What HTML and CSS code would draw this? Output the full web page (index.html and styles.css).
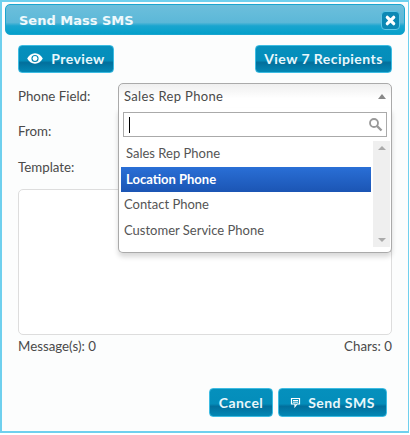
FILE: index.html
```html
<!DOCTYPE html>
<html>
<head>
  <meta charset="UTF-8">
  <title>Send Mass SMS</title>
  <link rel="stylesheet" href="styles.css">
</head>
<body>
<div class="dialog">
  <div class="titlebar">
    <span class="title">Send Mass SMS</span>
    <button class="close" aria-label="Close">
      <svg width="11" height="11" viewBox="0 0 11 11"><path d="M2.3 2.3 L8.7 8.7 M8.7 2.3 L2.3 8.7" stroke="#fff" stroke-width="3.2" stroke-linecap="round"/></svg>
    </button>
  </div>

  <div class="content">
    <div class="toolbar">
      <button class="btn btn-preview">
        <svg width="16" height="11" viewBox="0 0 16 11"><path fill-rule="evenodd" fill="#fff" d="M8 0.3 C4.5 0.3 1.8 2.6 0.2 5.5 C1.8 8.4 4.5 10.7 8 10.7 C11.5 10.7 14.2 8.4 15.8 5.5 C14.2 2.6 11.5 0.3 8 0.3 Z M8 1.9 A3.6 3.6 0 1 1 8 9.1 A3.6 3.6 0 1 1 8 1.9 Z"/><circle cx="8" cy="5.5" r="2.4" fill="#fff"/></svg>
        Preview
      </button>
      <button class="btn btn-recipients">View 7 Recipients</button>
    </div>

    <div class="field-row phone-row">
      <label class="field-label">Phone Field:</label>
      <div class="select-wrap">
        <div class="select">
          <span>Sales Rep Phone</span>
          <span class="arrow-up"></span>
        </div>
        <div class="dropdown">
          <div class="search">
            <span class="caret"></span>
            <svg width="15" height="15" viewBox="0 0 15 15"><circle cx="6" cy="6" r="4" fill="none" stroke="#999" stroke-width="1.8"/><path d="M9 9 L13.5 13.5" stroke="#999" stroke-width="2.4"/></svg>
          </div>
          <div class="list-wrap">
            <ul class="list">
              <li class="first">Sales Rep Phone</li>
              <li class="active">Location Phone</li>
              <li>Contact Phone</li>
              <li>Customer Service Phone</li>
            </ul>
            <div class="scrollbar">
              <span class="sb-up"></span>
              <span class="sb-down"></span>
            </div>
          </div>
        </div>
      </div>
    </div>
    <div class="field-row from-row">
      <label class="field-label">From:</label>
    </div>
    <div class="field-row template-row">
      <label class="field-label">Template:</label>
    </div>

    <div class="message-box"></div>

    <div class="counts">
      <span>Message(s): 0</span>
      <span>Chars: 0</span>
    </div>

    <div class="actions">
      <button class="btn btn-cancel">Cancel</button>
      <button class="btn btn-send">
        <svg width="11" height="11" viewBox="0 0 11 11"><path fill="none" stroke="#fff" stroke-width="1.2" d="M1.5 1.5 H9.5 V7 H7 L5 9.5 V7 H1.5 Z"/><path stroke="#fff" d="M3 3.5 H8 M3 5.2 H8"/></svg>
        Send SMS
      </button>
    </div>
  </div>
</div>
</body>
</html>
```
FILE: styles.css
```css
html,
body {
  margin: 0;
  padding: 0;
  background: #fff;
}

body {
  font-family: "Lato", sans-serif;
  font-size: 13.3px;
  color: #4a4a4a;
}

.dialog {
  box-sizing: border-box;
  width: 409px;
  height: 433px;
  padding: 2px 3px 3px 3px;
  border: 2px solid #6fd0ee;
  border-right-width: 1px;
  background: #fcfdfd;
}

/* title bar */
.titlebar {
  display: flex;
  align-items: center;
  justify-content: space-between;
  height: 31px;
  box-sizing: border-box;
  padding: 0 4px 0 13px;
  border-radius: 5px;
  border: 1px solid #1ba5cf;
  background: linear-gradient(#6cbfdc 0%, #5cb8d8 60%, #1aa5cf 72%, #04a0ca 100%);
}

.title {
  padding-top: 1px;
  font-family: "DejaVu Sans", sans-serif;
  font-size: 13px;
  font-weight: bold;
  color: #eef9fc;
}

.close {
  width: 19px;
  height: 19px;
  margin-top: 1px;
  padding: 0;
  display: flex;
  align-items: center;
  justify-content: center;
  border: 1px solid #5cc6e6;
  border-radius: 4px;
  background: #0b88b4;
}

.content {
  padding: 10px 13px 0 13px;
}

.toolbar {
  display: flex;
  justify-content: space-between;
}

/* buttons */
.btn {
  display: inline-flex;
  align-items: center;
  justify-content: center;
  gap: 8px;
  box-sizing: border-box;
  height: 28px;
  padding: 0 0 1px 0;
  font-family: "Lato", sans-serif;
  font-size: 14px;
  font-weight: bold;
  letter-spacing: 0.45px;
  color: #e9f7fb;
  border: 1px solid #3dbce2;
  border-radius: 4px;
  background: linear-gradient(#0590bd 0%, #048dba 55%, #026f9c 64%, #0388b5 100%);
}

.btn-preview {
  width: 96px;
}

.btn-recipients {
  width: 137px;
}

.btn-cancel {
  width: 64px;
}

.btn-send {
  gap: 7px;
  width: 109px;
}

/* form rows */
.field-row {
  display: flex;
}

.field-label {
  width: 100px;
  padding-top: 4px;
  flex: none;
}

.phone-row {
  height: 36px;
  margin-top: 10px;
}

.phone-row .field-label {
  padding-top: 5px;
}

.from-row {
  height: 36px;
}

.template-row {
  height: 34px;
}

/* select and its open list */
.select-wrap {
  position: relative;
  width: 274px;
}

.select {
  display: flex;
  align-items: center;
  justify-content: space-between;
  box-sizing: border-box;
  height: 26px;
  padding: 0 5px;
  border: 1px solid #aaa;
  border-radius: 5px 5px 0 0;
  background: linear-gradient(#efefef, #fff 60%);
  font-size: 13px;
  letter-spacing: 0.35px;
}

.arrow-up {
  width: 0;
  height: 0;
  border-left: 4px solid transparent;
  border-right: 4px solid transparent;
  border-bottom: 5px solid #888;
}

.dropdown {
  position: absolute;
  top: 25px;
  left: 0;
  right: 0;
  box-sizing: border-box;
  height: 145px;
  padding: 4px;
  border: 1px solid #aaa;
  border-top: none;
  border-radius: 0 0 5px 5px;
  background: #fff;
  box-shadow: 0 4px 5px rgba(0, 0, 0, 0.15);
}

.search {
  display: flex;
  align-items: center;
  justify-content: space-between;
  box-sizing: border-box;
  height: 25px;
  padding: 0 3px 0 5px;
  border: 1px solid #aaa;
}

.caret {
  width: 1px;
  height: 16px;
  background: #000;
}

.list-wrap {
  display: flex;
  justify-content: space-between;
  margin-top: 4px;
  margin-right: -3px;
}

.list {
  flex: 1;
  margin: 0 2px 0 -2px;
  padding: 0;
  list-style: none;
  font-size: 13px;
}

.list li {
  height: 25.5px;
  line-height: 25px;
  padding-left: 3px;
  color: #555;
}

.list li.first {
  padding-left: 5px;
}

.list li.active {
  color: #fff;
  font-weight: bold;
  padding-left: 5px;
  background: linear-gradient(#2a6fd6, #1b55b4);
}

.scrollbar {
  display: flex;
  flex-direction: column;
  justify-content: space-between;
  align-items: center;
  box-sizing: border-box;
  flex: none;
  width: 17px;
  height: 106px;
  padding: 5px 0;
  background: #efefef;
}

.sb-up,
.sb-down {
  width: 0;
  height: 0;
  border-left: 4px solid transparent;
  border-right: 4px solid transparent;
}

.sb-up {
  border-bottom: 4px solid #aaa;
}

.sb-down {
  border-top: 4px solid #aaa;
}

/* message area */
.message-box {
  box-sizing: border-box;
  height: 146px;
  border: 1px solid #ddd;
  border-radius: 5px;
  background: #fff;
}

.counts {
  display: flex;
  justify-content: space-between;
  margin-top: 3px;
}

.actions {
  display: flex;
  justify-content: flex-end;
  gap: 5px;
  margin-top: 34px;
  padding-right: 5px;
}

.actions .btn {
  height: 29px;
}
```
